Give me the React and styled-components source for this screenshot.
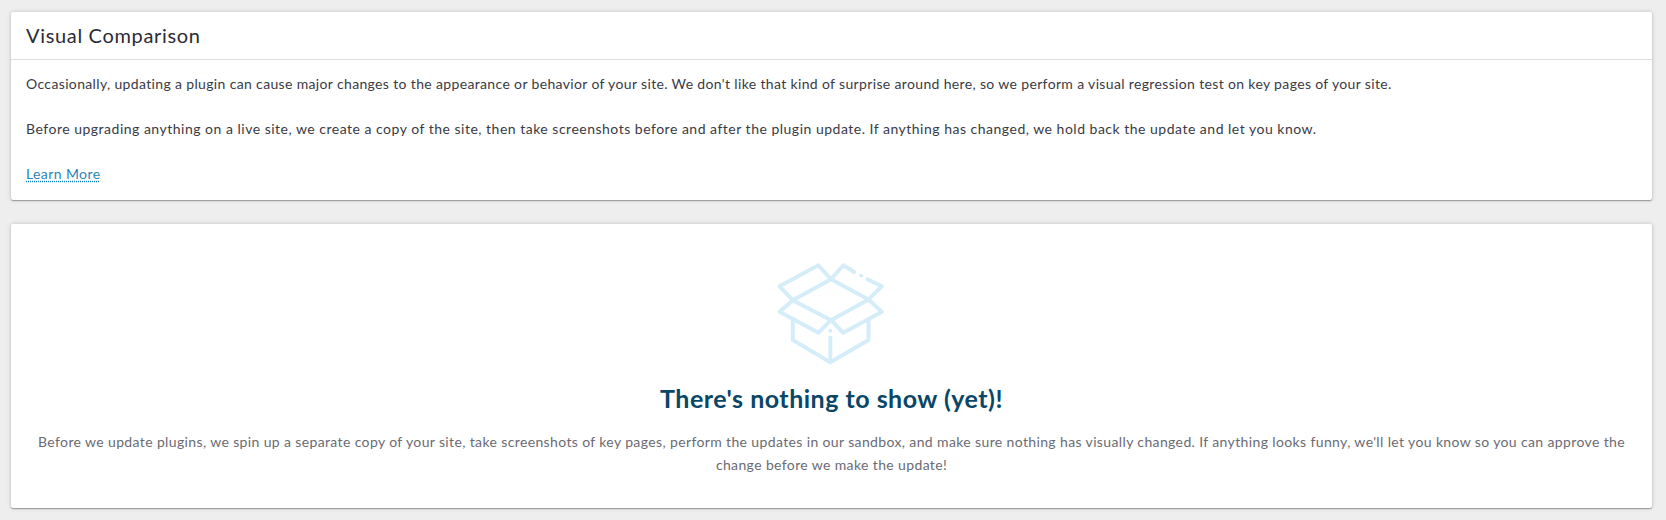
import React from 'react'
import styled, {createGlobalStyle} from 'styled-components'

const GlobalStyle = createGlobalStyle`
    html, body {
        margin: 0;
        background: #eeeeee;
    }
    body {
        font-family: "Lato", "Noto Sans", sans-serif;
    }
`

function BoxIcon() {
    return (
        <StyledIcon viewBox="110 35 330 310" fill="none" stroke="#d4edf9" strokeWidth="12" strokeLinecap="round" strokeLinejoin="round">
            <path d="M275 87 L388 148 L275 210 L160 150 Z" />
            <path d="M275 87 L237 45 L120 108 L160 150" />
            <path d="M275 87 L312 45 L345 65" />
            <path d="M385 87 L428 108 L388 148" />
            <path d="M160 150 L120 185 L237 248 L275 210" />
            <path d="M388 148 L428 185 L312 248 L275 210" />
            <path d="M160 208 V270 L273 337 L388 270 V208" />
            <path d="M273 262 V337" />
            <circle cx="366" cy="76" r="6" fill="#d4edf9" stroke="none" />
            <circle cx="273" cy="242" r="6" fill="#d4edf9" stroke="none" />
        </StyledIcon>
    )
}

function App() {
    return (
        <StyledPage>
            <GlobalStyle />
            <StyledCard>
                <StyledHeader>Visual Comparison</StyledHeader>
                <StyledBody>
                    <StyledParagraph $spacing={0.35}>Occasionally, updating a plugin can cause major changes to the appearance or behavior of your site. We don't like that kind of surprise around here, so we perform a visual regression test on key pages of your site.</StyledParagraph>
                    <StyledParagraph $spacing={0.5}>Before upgrading anything on a live site, we create a copy of the site, then take screenshots before and after the plugin update. If anything has changed, we hold back the update and let you know.</StyledParagraph>
                    <a href="#learn-more">Learn More</a>
                </StyledBody>
            </StyledCard>
            <StyledEmpty>
                <BoxIcon />
                <h2>There's nothing to show (yet)!</h2>
                <p>Before we update plugins, we spin up a separate copy of your site, take screenshots of key pages, perform the updates in our sandbox, and make sure nothing has visually changed. If anything looks funny, we'll let you know so you can approve the change before we make the update!</p>
            </StyledEmpty>
        </StyledPage>
    )
}

const StyledPage = styled.div`
    display: flex;
    flex-direction: column;
    gap: 24px;
    height: 520px;
    box-sizing: border-box;
    padding: 12px 14px 0 11px;
    overflow: hidden;
    background: #eeeeee;
`

const StyledCard = styled.section`
    height: 188px;
    background: white;
    border-radius: 2px;
    box-shadow: 0 1px 1px rgba(0, 0, 0, 0.3), 0 0 4px rgba(0, 0, 0, 0.2);
`

const StyledHeader = styled.h1`
    margin: 0;
    height: 48px;
    box-sizing: border-box;
    padding: 0 15px 2px;
    display: flex;
    align-items: center;
    font-size: 20px;
    font-weight: 400;
    letter-spacing: 0.67px;
    color: #2b2b36;
    border-bottom: 1px solid #dddddd;
`

const StyledBody = styled.div`
    padding: 13px 15px;
    font-size: 14px;
    line-height: 22px;
    color: #3a3a44;
    a {
        color: #2b86b8;
        letter-spacing: 0.4px;
        text-decoration: underline dotted #0a7fc0;
        text-underline-offset: 2px;
    }
`

const StyledParagraph = styled.p`
    margin: 0 0 23px;
    letter-spacing: ${props => props.$spacing}px;
`

const StyledEmpty = styled.section`
    height: 284px;
    box-sizing: border-box;
    padding: 38px 15px 0;
    display: flex;
    flex-direction: column;
    align-items: center;
    text-align: center;
    background: white;
    border-radius: 2px;
    box-shadow: 0 1px 1px rgba(0, 0, 0, 0.3), 0 0 4px rgba(0, 0, 0, 0.2);
    h2 {
        margin: 17px 0 0;
        font-size: 25px;
        line-height: 32px;
        font-weight: 700;
        letter-spacing: 0.5px;
        color: #0a4666;
    }
    p {
        margin: 16px 0 0;
        font-size: 14px;
        line-height: 23px;
        letter-spacing: 0.37px;
        color: #6b6b73;
    }
`

const StyledIcon = styled.svg`
    width: 110px;
    height: 103px;
    display: block;
    margin-right: 1px;
`

export default App
